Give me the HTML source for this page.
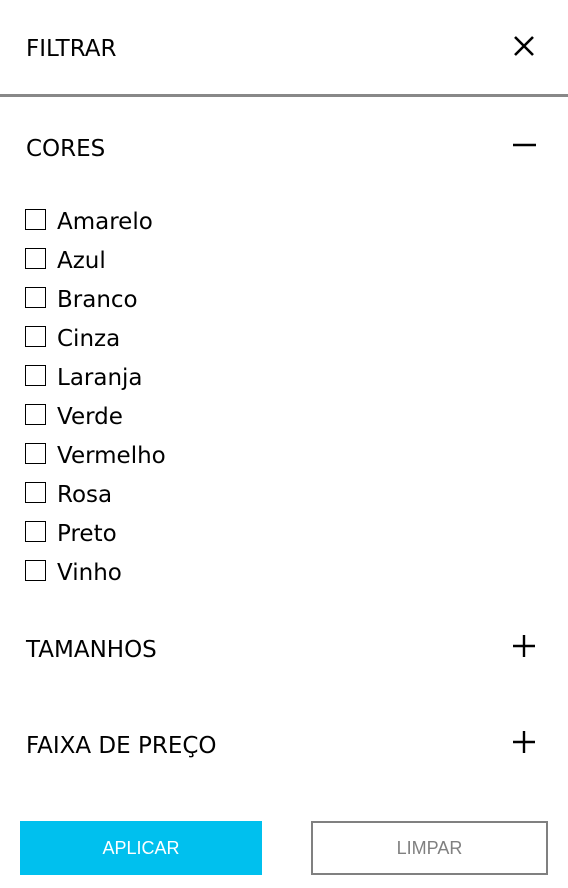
<!DOCTYPE html>
<html><head><style>
body{margin:0;width:568px;height:888px;background:#fff;font-family:"Liberation Sans",sans-serif;color:#000;position:relative;overflow:hidden}
.t{position:absolute;left:26px;font-family:"DejaVu Sans",sans-serif;font-size:23px;line-height:26px;white-space:nowrap}
.line{position:absolute;left:0;top:94px;width:568px;height:3px;background:#888}
.cb{position:absolute;left:25px;width:19px;height:19px;border:1px solid #000;box-sizing:content-box}
.lbl{position:absolute;left:57px;font-family:"DejaVu Sans",sans-serif;font-size:23px;line-height:26px}
.btn{position:absolute;top:821px;height:54px;box-sizing:border-box;font-size:18px;text-align:center;line-height:54px}
svg{position:absolute}
</style></head><body>
<div class="t" style="top:36px">FILTRAR</div>
<svg style="left:512px;top:34px" width="24" height="24"><path d="M3 3L21 21M21 3L3 21" stroke="#000" stroke-width="2.6"/></svg>
<div class="line"></div>
<div class="t" style="top:136px">CORES</div>
<svg style="left:512px;top:134px" width="24" height="24"><path d="M1 11H24" stroke="#000" stroke-width="2.4"/></svg>

<div class="cb" style="top:209px"></div><div class="lbl" style="top:209px">Amarelo</div>
<div class="cb" style="top:248px"></div><div class="lbl" style="top:248px">Azul</div>
<div class="cb" style="top:287px"></div><div class="lbl" style="top:287px">Branco</div>
<div class="cb" style="top:326px"></div><div class="lbl" style="top:326px">Cinza</div>
<div class="cb" style="top:365px"></div><div class="lbl" style="top:365px">Laranja</div>
<div class="cb" style="top:404px"></div><div class="lbl" style="top:404px">Verde</div>
<div class="cb" style="top:443px"></div><div class="lbl" style="top:443px">Vermelho</div>
<div class="cb" style="top:482px"></div><div class="lbl" style="top:482px">Rosa</div>
<div class="cb" style="top:521px"></div><div class="lbl" style="top:521px">Preto</div>
<div class="cb" style="top:560px"></div><div class="lbl" style="top:560px">Vinho</div>

<div class="t" style="top:637px">TAMANHOS</div>
<svg style="left:512px;top:634px" width="24" height="24"><path d="M1 12H23M12 1V23" stroke="#000" stroke-width="2.4"/></svg>
<div class="t" style="top:733px">FAIXA DE PREÇO</div>
<svg style="left:512px;top:730px" width="24" height="24"><path d="M1 12H23M12 1V23" stroke="#000" stroke-width="2.4"/></svg>

<div class="btn" style="left:20px;width:242px;background:#00c0ee;color:#fff">APLICAR</div>
<div class="btn" style="left:311px;width:237px;border:2px solid #808080;color:#808080;line-height:50px">LIMPAR</div>
</body></html>
